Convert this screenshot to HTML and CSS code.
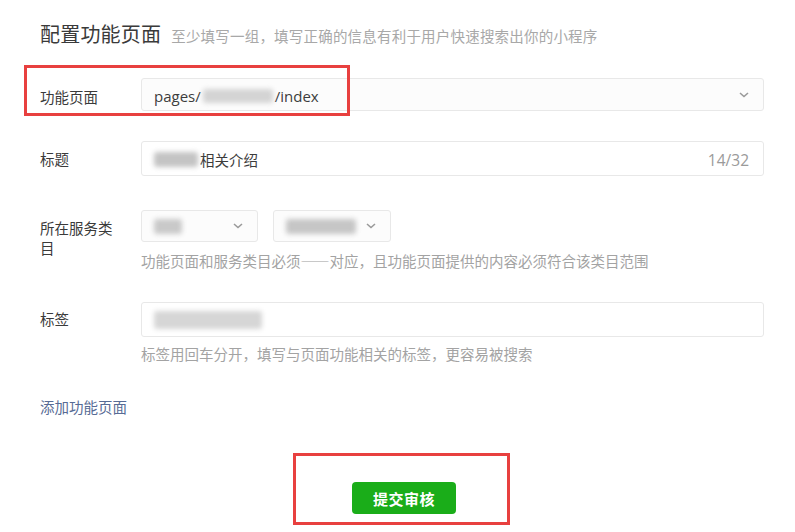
FILE: index.html
```html
<!DOCTYPE html>
<html lang="zh-CN">
<head>
<meta charset="utf-8">
<title>配置功能页面</title>
<link rel="stylesheet" href="styles.css">
</head>
<body>
<div class="page">
  <div class="header">
    <h1 class="title">配置功能页面</h1>
    <span class="subtitle">至少填写一组，填写正确的信息有利于用户快速搜索出你的小程序</span>
  </div>

  <div class="row row-page">
    <div class="label">功能页面</div>
    <div class="field">
      <div class="select wide">
        <span class="latin">pages/<span class="blur blur-path"></span>/index</span>
        <svg class="chev" width="10" height="6" viewBox="0 0 10 6"><path d="M1 1l4 3.5L9 1" fill="none" stroke="#9a9a9a" stroke-width="1.6"/></svg>
      </div>
    </div>
  </div>

  <div class="row row-title">
    <div class="label">标题</div>
    <div class="field">
      <div class="input wide">
        <span class="val"><span class="blur blur-title"></span>相关介绍</span>
        <span class="count">14/32</span>
      </div>
    </div>
  </div>

  <div class="row row-cat">
    <div class="label">所在服务类目</div>
    <div class="field">
      <div class="selects">
        <div class="select small s1">
          <span class="blur blur-s1"></span>
          <svg class="chev" width="10" height="6" viewBox="0 0 10 6"><path d="M1 1l4 3.5L9 1" fill="none" stroke="#9a9a9a" stroke-width="1.6"/></svg>
        </div>
        <div class="select small s2">
          <span class="blur blur-s2"></span>
          <svg class="chev" width="10" height="6" viewBox="0 0 10 6"><path d="M1 1l4 3.5L9 1" fill="none" stroke="#9a9a9a" stroke-width="1.6"/></svg>
        </div>
      </div>
      <p class="help help-cat">功能页面和服务类目必须——对应，且功能页面提供的内容必须符合该类目范围</p>
    </div>
  </div>

  <div class="row row-tag">
    <div class="label">标签</div>
    <div class="field">
      <div class="input wide">
        <span class="blur blur-tag"></span>
      </div>
      <p class="help help-tag">标签用回车分开，填写与页面功能相关的标签，更容易被搜索</p>
    </div>
  </div>

  <a class="add-link" href="#">添加功能页面</a>

  <div class="actions">
    <button class="submit" type="button">提交审核</button>
  </div>

  <div class="mark mark-page"></div>
  <div class="mark mark-submit"></div>
</div>
</body>
</html>
```

FILE: styles.css
```css
* { box-sizing: border-box; }
html, body { margin: 0; padding: 0; background: #fff; }
body {
  font-family: "Noto Sans CJK SC", "Noto Sans", sans-serif;
  color: #353535;
  font-size: 14.5px;
}
.page {
  position: relative;
  width: 795px;
  height: 532px;
  padding: 20px 0 0 40px;
  overflow: hidden;
}
.header {
  display: flex;
  align-items: baseline;
  height: 28px;
}
.title {
  margin: 0;
  font-size: 20px;
  font-weight: 400;
  color: #3a3a3a;
  line-height: 28px;
  letter-spacing: 0.2px;
}
.subtitle {
  margin-left: 10px;
  font-size: 14.5px;
  color: #a8a8a8;
  letter-spacing: 0.2px;
}
.row {
  display: flex;
  align-items: flex-start;
}
.label {
  width: 76px;
  margin-right: 25px;
  line-height: 20px;
  font-size: 14.5px;
  color: #3a3a3a;
}
.field { display: flex; flex-direction: column; }
.row-page { margin-top: 30px; }
.row-page .label { padding-top: 9px; }
.row-title { margin-top: 30px; }
.row-title .label { padding-top: 8px; }
.row-cat { margin-top: 34px; }
.row-cat .label { padding-top: 8px; }
.row-tag { margin-top: 31px; }
.row-tag .label { padding-top: 7px; }

.select, .input {
  position: relative;
  display: flex;
  align-items: center;
  border: 1px solid #e8e8e8;
  border-radius: 3px;
  background: #fff;
}
.wide { width: 623px; }
.select { background: #fcfcfc; }
.row-page .select { height: 33px; padding: 0 14px 0 12px; }
.row-title .input { height: 35px; padding: 0 14px 0 12px; justify-content: space-between; }
.row-tag .input { height: 35px; padding: 0 12px; }
.chev { margin-left: auto; }
.latin {
  font-family: "Open Sans", "Noto Sans", sans-serif;
  font-size: 15px;
  color: #3c3c3c;
  display: flex;
  align-items: center;
  padding-top: 2px;
}
.val { display: flex; align-items: center; color: #3c3c3c; font-size: 14.5px; padding-top: 2px; }
.count {
  font-family: "Open Sans", "Noto Sans", sans-serif;
  font-size: 15.5px;
  color: #9a9a9a;
  padding-top: 2px;
}
.blur {
  display: inline-block;
  background: #c9c9c9;
  filter: blur(2.5px);
  border-radius: 3px;
}
.blur-path { width: 70px; height: 14px; margin: 0 2px; background: #d4d4d4; }
.blur-title { width: 44px; height: 15px; margin-right: 2px; background: #c4c4c4; }
.blur-s1 { width: 28px; height: 15px; }
.blur-s2 { width: 70px; height: 15px; background: #c6c6c6; }
.blur-tag { width: 108px; height: 18px; background: #d6d6d6; }
.selects { display: flex; gap: 15px; }
.small { height: 32px; padding: 0 14px 0 12px; }
.s1 { width: 117px; }
.s2 { width: 118px; }
.help {
  margin: 0;
  line-height: 20px;
  font-size: 14.5px;
  color: #a3a3a3;
}
.help-cat { margin-top: 9px; }
.help-tag { margin-top: 7px; }
.add-link {
  display: block;
  margin-top: 33px;
  line-height: 20px;
  font-size: 14.5px;
  color: #576b95;
  text-decoration: none;
  width: 90px;
}
.actions {
  margin-top: 65px;
  padding-left: 312px;
}
.submit {
  width: 104px;
  height: 32px;
  border: 0;
  border-radius: 4px;
  background: #1aad19;
  color: #fff;
  font-family: "Noto Sans CJK SC", sans-serif;
  font-size: 15px;
  font-weight: 700;
  letter-spacing: 0.5px;
}
.mark {
  position: absolute;
  border: 3px solid #e8403f;
}
.mark-page { left: 24px; top: 65px; width: 326px; height: 51px; }
.mark-submit { left: 293px; top: 453px; width: 217px; height: 72px; }
```
